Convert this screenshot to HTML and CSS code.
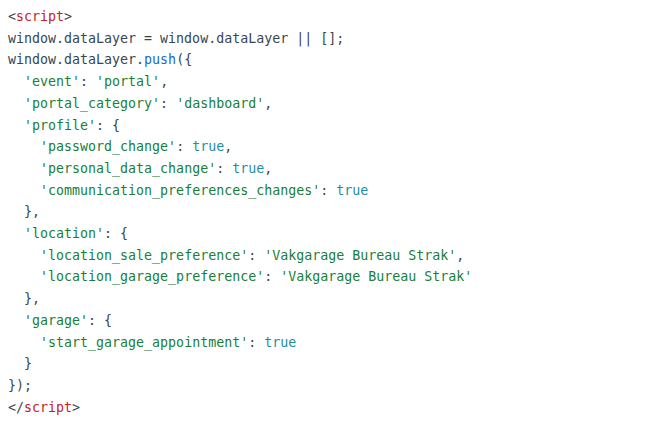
FILE: index.html
```html
<!DOCTYPE html>
<html>
<head>
<meta charset="utf-8">
<link rel="stylesheet" href="styles.css">
</head>
<body>
<pre class="code"><span class="pun">&lt;</span><span class="tag">script</span><span class="pun">&gt;</span>
window.dataLayer = window.dataLayer || [];
window.dataLayer.<span class="kwd">push</span>({
  <span class="str">'event'</span>: <span class="str">'portal'</span>,
  <span class="str">'portal_category'</span>: <span class="str">'dashboard'</span>,
  <span class="str">'profile'</span>: {
    <span class="str">'password_change'</span>: <span class="lit">true</span>,
    <span class="str">'personal_data_change'</span>: <span class="lit">true</span>,
    <span class="str">'communication_preferences_changes'</span>: <span class="lit">true</span>
  },
  <span class="str">'location'</span>: {
    <span class="str">'location_sale_preference'</span>: <span class="str">'Vakgarage Bureau Strak'</span>,
    <span class="str">'location_garage_preference'</span>: <span class="str">'Vakgarage Bureau Strak'</span>
  },
  <span class="str">'garage'</span>: {
    <span class="str">'start_garage_appointment'</span>: <span class="lit">true</span>
  }
});
<span class="pun">&lt;/</span><span class="tag">script</span><span class="pun">&gt;</span></pre>
</body>
</html>
```
FILE: styles.css
```css
html, body {
  margin: 0;
  padding: 0;
  background: #ffffff;
}
.code {
  margin: 0;
  padding: 6px 8px;
  font-family: "DejaVu Sans Mono", "Liberation Mono", monospace;
  font-size: 13.3px;
  line-height: 21.7px;
  color: #37474f;
  white-space: pre;
}
.tag { color: #c5221f; }
.kwd { color: #1967d2; }
.str { color: #188038; }
.lit { color: #1e8e9e; }
.pun { color: #37474f; }
```
